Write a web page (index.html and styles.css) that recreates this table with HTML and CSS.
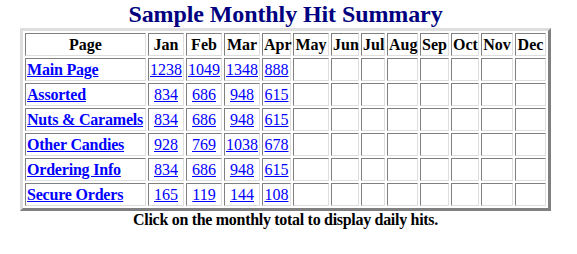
FILE: index.html
```html
<!DOCTYPE html>
<html>
<head>
<meta charset="utf-8">
<title>Sample Monthly Hit Summary</title>
<link rel="stylesheet" href="styles.css">
</head>
<body>
<div class="page">
  <h1 class="title">Sample Monthly Hit Summary</h1>
  <table class="hits">
    <thead>
      <tr>
        <th class="c-page">Page</th>
        <th class="c-jan">Jan</th>
        <th class="c-feb">Feb</th>
        <th class="c-mar">Mar</th>
        <th class="c-apr">Apr</th>
        <th class="c-may">May</th>
        <th class="c-jun">Jun</th>
        <th class="c-jul">Jul</th>
        <th class="c-aug">Aug</th>
        <th class="c-sep">Sep</th>
        <th class="c-oct">Oct</th>
        <th class="c-nov">Nov</th>
        <th class="c-dec">Dec</th>
      </tr>
    </thead>
    <tbody>
      <tr>
        <td class="pg"><a href="#">Main Page</a></td>
        <td class="num"><a href="#">1238</a></td>
        <td class="num"><a href="#">1049</a></td>
        <td class="num"><a href="#">1348</a></td>
        <td class="num"><a href="#">888</a></td>
        <td></td><td></td><td></td><td></td><td></td><td></td><td></td><td></td>
      </tr>
      <tr>
        <td class="pg"><a href="#">Assorted</a></td>
        <td class="num"><a href="#">834</a></td>
        <td class="num"><a href="#">686</a></td>
        <td class="num"><a href="#">948</a></td>
        <td class="num"><a href="#">615</a></td>
        <td></td><td></td><td></td><td></td><td></td><td></td><td></td><td></td>
      </tr>
      <tr>
        <td class="pg"><a href="#">Nuts &amp; Caramels</a></td>
        <td class="num"><a href="#">834</a></td>
        <td class="num"><a href="#">686</a></td>
        <td class="num"><a href="#">948</a></td>
        <td class="num"><a href="#">615</a></td>
        <td></td><td></td><td></td><td></td><td></td><td></td><td></td><td></td>
      </tr>
      <tr>
        <td class="pg"><a href="#">Other Candies</a></td>
        <td class="num"><a href="#">928</a></td>
        <td class="num"><a href="#">769</a></td>
        <td class="num"><a href="#">1038</a></td>
        <td class="num"><a href="#">678</a></td>
        <td></td><td></td><td></td><td></td><td></td><td></td><td></td><td></td>
      </tr>
      <tr>
        <td class="pg"><a href="#">Ordering Info</a></td>
        <td class="num"><a href="#">834</a></td>
        <td class="num"><a href="#">686</a></td>
        <td class="num"><a href="#">948</a></td>
        <td class="num"><a href="#">615</a></td>
        <td></td><td></td><td></td><td></td><td></td><td></td><td></td><td></td>
      </tr>
      <tr>
        <td class="pg"><a href="#">Secure Orders</a></td>
        <td class="num"><a href="#">165</a></td>
        <td class="num"><a href="#">119</a></td>
        <td class="num"><a href="#">144</a></td>
        <td class="num"><a href="#">108</a></td>
        <td></td><td></td><td></td><td></td><td></td><td></td><td></td><td></td>
      </tr>
    </tbody>
  </table>
  <p class="note">Click on the monthly total to display daily hits.</p>
</div>
</body>
</html>
```
FILE: styles.css
```css
html, body {
  margin: 0;
  padding: 0;
  background: #ffffff;
}

body {
  font-family: "Liberation Serif", "Times New Roman", serif;
  font-size: 16px;
  color: #000000;
}

.page {
  width: 531px;
  margin-left: 20px;
}

.title {
  margin: 0;
  font-size: 24px;
  font-weight: bold;
  line-height: 28px;
  text-align: center;
  color: #000080;
  white-space: nowrap;
  letter-spacing: -0.1px;
}

.hits {
  width: 531px;
  table-layout: fixed;
  border-collapse: separate;
  border-spacing: 2px;
  border: 3px solid;
  border-color: #dedede #808080 #808080 #dedede;
  background: #ffffff;
}

.hits th,
.hits td {
  border: 1px solid;
  border-color: #808080 #dedede #dedede #808080;
  padding: 1px;
  line-height: 19px;
  height: 19px;
  font-size: 16px;
  white-space: nowrap;
  overflow: visible;
}

.hits th {
  font-weight: bold;
  text-align: center;
}

.hits a {
  color: #0000ff;
  text-decoration: underline;
}

.pg {
  text-align: left;
  font-weight: bold;
  letter-spacing: -0.2px;
}

.num {
  text-align: center;
}

.c-page { width: 117px; }
.c-jan { width: 32px; }
.c-feb { width: 32px; }
.c-mar { width: 32px; }
.c-apr { width: 25px; }
.c-may { width: 32px; }
.c-jun { width: 24px; }
.c-jul { width: 20px; }
.c-aug { width: 27px; }
.c-sep { width: 25px; }
.c-oct { width: 24px; }
.c-nov { width: 28px; }
.c-dec { width: 27px; }

.note {
  margin: 0;
  font-size: 16px;
  font-weight: bold;
  text-align: center;
  white-space: nowrap;
  letter-spacing: -0.3px;
}
```
